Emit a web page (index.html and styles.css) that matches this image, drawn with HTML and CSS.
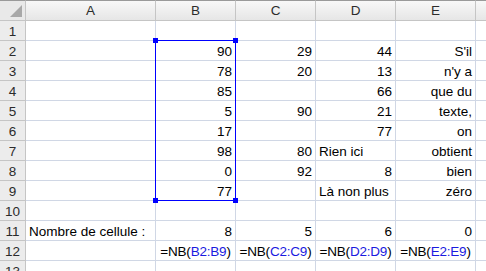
FILE: index.html
```html
<!DOCTYPE html>
<html>
<head>
<meta charset="utf-8">
<link rel="stylesheet" href="styles.css">
</head>
<body>
<div class="sheet">
  <div class="grid">
    <div class="h corner"><span class="tri"></span></div>
    <div class="h col">A</div><div class="h col">B</div><div class="h col">C</div><div class="h col">D</div><div class="h col">E</div><div class="h col last"></div>

    <div class="h row">1</div><div class="c"></div><div class="c"></div><div class="c"></div><div class="c"></div><div class="c"></div><div class="c"></div>
    <div class="h row">2</div><div class="c"></div><div class="c r">90</div><div class="c r">29</div><div class="c r">44</div><div class="c r">S'il</div><div class="c"></div>
    <div class="h row">3</div><div class="c"></div><div class="c r">78</div><div class="c r">20</div><div class="c r">13</div><div class="c r">n'y a</div><div class="c"></div>
    <div class="h row">4</div><div class="c"></div><div class="c r">85</div><div class="c r"></div><div class="c r">66</div><div class="c r">que du</div><div class="c"></div>
    <div class="h row">5</div><div class="c"></div><div class="c r">5</div><div class="c r">90</div><div class="c r">21</div><div class="c r">texte,</div><div class="c"></div>
    <div class="h row">6</div><div class="c"></div><div class="c r">17</div><div class="c r"></div><div class="c r">77</div><div class="c r">on</div><div class="c"></div>
    <div class="h row">7</div><div class="c"></div><div class="c r">98</div><div class="c r">80</div><div class="c">Rien ici</div><div class="c r">obtient</div><div class="c"></div>
    <div class="h row">8</div><div class="c"></div><div class="c r">0</div><div class="c r">92</div><div class="c r">8</div><div class="c r">bien</div><div class="c"></div>
    <div class="h row">9</div><div class="c"></div><div class="c r">77</div><div class="c r"></div><div class="c">Là non plus</div><div class="c r">zéro</div><div class="c"></div>
    <div class="h row">10</div><div class="c"></div><div class="c"></div><div class="c"></div><div class="c"></div><div class="c"></div><div class="c"></div>
    <div class="h row">11</div><div class="c">Nombre de cellule :</div><div class="c r">8</div><div class="c r">5</div><div class="c r">6</div><div class="c r">0</div><div class="c"></div>
    <div class="h row">12</div><div class="c"></div><div class="c m">=NB(<b>B2:B9</b>)</div><div class="c m">=NB(<b>C2:C9</b>)</div><div class="c m">=NB(<b>D2:D9</b>)</div><div class="c m">=NB(<b>E2:E9</b>)</div><div class="c"></div>
    <div class="h row">13</div><div class="c"></div><div class="c"></div><div class="c"></div><div class="c"></div><div class="c"></div><div class="c"></div>
  </div>
  <div class="sel">
    <span class="hd tl"></span><span class="hd tr"></span><span class="hd bl"></span><span class="hd br"></span>
  </div>
</div>
</body>
</html>
```
FILE: styles.css
```css
html, body {
  margin: 0;
  padding: 0;
  background: #ffffff;
  overflow: hidden;
}
.sheet {
  position: relative;
  width: 486px;
  height: 271px;
  overflow: hidden;
  font-family: "Liberation Sans", Arial, sans-serif;
  font-size: 13.5px;
  color: #000;
}
.grid {
  display: grid;
  grid-template-columns: 26px 130px 80px 80px 80px 80px 30px;
  grid-template-rows: 21px repeat(13, 20px);
}
.c, .h {
  box-sizing: border-box;
  border-right: 1px solid #d0d7e5;
  border-bottom: 1px solid #d0d7e5;
  display: flex;
  align-items: flex-end;
  line-height: 15px;
  padding: 0 3px 1px 3px;
  white-space: nowrap;
  overflow: visible;
}
.c.r { justify-content: flex-end; }
.c.m { justify-content: center; padding: 0 0 1px 0; letter-spacing: -0.2px; }
.c b { color: #1a1ae0; font-weight: normal; }
.h {
  color: #2b2b2b;
  justify-content: center;
  padding: 0 0 2px 0;
  border-right: 1px solid #c5c5c5;
  border-bottom: 1px solid #c5c5c5;
}
.h.col, .h.corner {
  border-top: 1px solid #9a9a9a;
  background: linear-gradient(#f8f8f8, #e6e6e6);
}
.h.row {
  background: #ececec;
  padding-bottom: 1px;
}
.h.col.last { border-right: none; }
.h.corner {
  position: relative;
  background: #e9e9e9;
}
.tri {
  position: absolute;
  right: 3px;
  bottom: 3px;
  width: 0;
  height: 0;
  border-left: 12px solid transparent;
  border-bottom: 12px solid #a8a8a8;
}
.sel {
  position: absolute;
  left: 155px;
  top: 40px;
  width: 81px;
  height: 161px;
  box-sizing: border-box;
  border: 1px solid #0000ff;
}
.hd {
  position: absolute;
  width: 5px;
  height: 5px;
  background: #0000ff;
}
.tl { left: -3px; top: -3px; }
.tr { right: -3px; top: -3px; }
.bl { left: -3px; bottom: -3px; }
.br { right: -3px; bottom: -3px; }
```
